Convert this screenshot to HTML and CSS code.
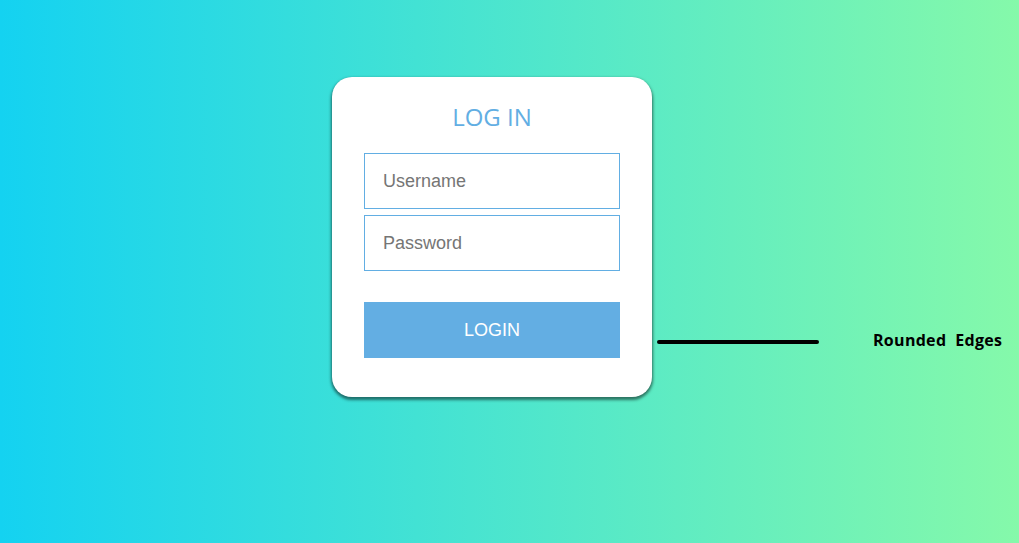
FILE: index.html
```html
<!DOCTYPE html>
<html>
<head>
<meta charset="utf-8">
<link rel="stylesheet" href="styles.css">
</head>
<body>
<div class="stage">
  <form class="card">
    <h1 class="title">LOG IN</h1>
    <div class="field">Username</div>
    <div class="field">Password</div>
    <div class="button">LOGIN</div>
  </form>
  <div class="pointer"></div>
  <div class="label">Rounded&nbsp; Edges</div>
</div>
</body>
</html>
```
FILE: styles.css
```css
html, body {
  margin: 0;
  padding: 0;
  height: 100%;
}
body {
  background: linear-gradient(to right, #14d2f1 0%, #85f9aa 100%);
  font-family: "Liberation Sans", Arial, sans-serif;
  overflow: hidden;
}
.stage {
  display: flex;
  align-items: flex-start;
  padding: 77px 0 0 332px;
}
.card {
  box-sizing: border-box;
  width: 320px;
  height: 320px;
  margin: 0;
  padding: 24px 32px 0 32px;
  background: #ffffff;
  border-radius: 20px;
  box-shadow: 0 2px 3px 1px rgba(0, 0, 0, 0.5);
  display: flex;
  flex-direction: column;
}
.title {
  margin: 0 0 20px 0;
  font-family: "Open Sans", sans-serif;
  font-weight: 400;
  font-size: 24px;
  line-height: 32px;
  color: #62aee3;
  text-align: center;
}
.field {
  box-sizing: border-box;
  height: 56px;
  border: 1px solid #62aee3;
  padding: 0 18px;
  display: flex;
  align-items: center;
  font-size: 18px;
  color: #757575;
  margin-bottom: 6px;
}
.field + .field {
  margin-bottom: 31px;
}
.button {
  height: 56px;
  background: #63aee3;
  color: #ffffff;
  font-size: 18px;
  display: flex;
  align-items: center;
  justify-content: center;
}
.pointer {
  width: 162px;
  height: 4px;
  border-radius: 2px;
  background: #000000;
  margin: 263px 0 0 5px;
}
.label {
  margin: 252px 0 0 54px;
  font-family: "Open Sans", sans-serif;
  font-weight: 700;
  font-size: 16px;
  letter-spacing: 0.3px;
  line-height: 22px;
  color: #000000;
  white-space: nowrap;
}
```
